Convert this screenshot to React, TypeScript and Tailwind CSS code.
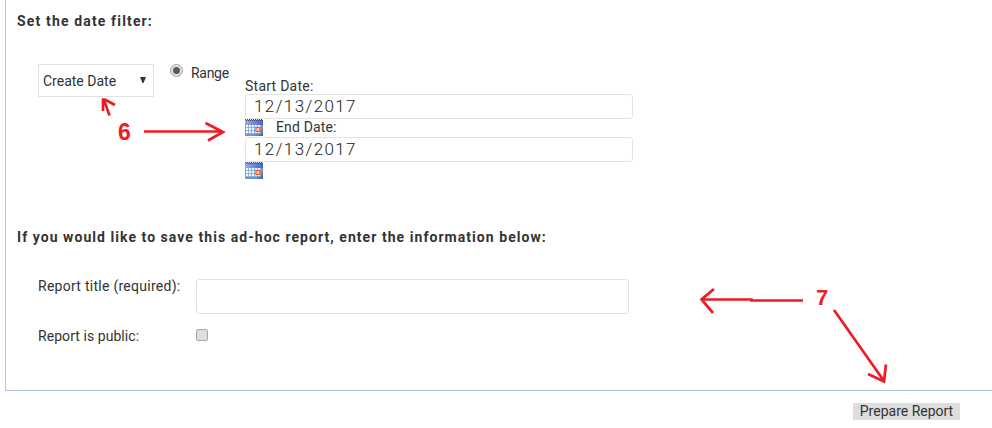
import React from "react";

function CalendarIcon() {
  return (
    <svg width="18" height="17" viewBox="0 0 18 17" className="block shrink-0">
      <defs>
        <linearGradient id="calHead" x1="0" x2="1" y1="0" y2="0">
          <stop offset="0" stopColor="#8fb0f2" />
          <stop offset="1" stopColor="#3a69d4" />
        </linearGradient>
        <linearGradient id="calBody" x1="0" x2="1" y1="0" y2="1">
          <stop offset="0" stopColor="#7fa6de" />
          <stop offset="0.75" stopColor="#6a92cc" />
          <stop offset="1" stopColor="#3c659f" />
        </linearGradient>
      </defs>
      <rect width="18" height="17" fill="url(#calBody)" />
      <rect width="18" height="6" fill="url(#calHead)" />
      <path d="M0 .5H18" stroke="#e2e2e2" />
      <path d="M0 .5H18M1 1.5H18" stroke="#4a4a4a" strokeDasharray="1 1" />
      {[6, 9, 12].map((y) =>
        [1, 4, 7, 10, 13].map((x) => (
          <rect key={`${x}-${y}`} x={x} y={y} width="2.300" height="2.300" fill="#f2f7ff" />
        ))
      )}
      <rect x="11" y="8.500" width="4" height="4" fill="#ffd9cc" stroke="#ee5a38" strokeWidth="1.300" />
    </svg>
  );
}

function DateInput({ value }: { value: string }) {
  return (
    <input
      readOnly
      value={value}
      className="block h-[25px] w-[388px] rounded-[3px] border border-[#e3e3e3] bg-white pl-[8px] pb-[1px] text-[17px] font-light tracking-[1.4px] text-[#222] outline-none"
    />
  );
}

export default function App() {
  return (
    <div className="relative h-[428px] w-[992px] overflow-hidden bg-white font-['Roboto','Liberation_Sans',sans-serif] text-[14px] leading-[16px] text-[#333]">
      <div className="ml-[5px] flex h-[391px] flex-col border-b border-l border-[#b0c6dd] pl-[11px] pt-[13px]">
        <h2 className="font-bold tracking-[1.15px]">Set the date filter:</h2>

        <div className="ml-[21px] mt-[35px] flex h-[116px] items-start">
          <div className="flex h-[33px] w-[116px] items-center justify-between border border-[#e1e1e1] pl-[4px] pr-[7px]">
            <span>Create Date</span>
            <svg width="6" height="6" viewBox="0 0 6 6" className="-mt-[2px]"><path d="M0 0H6L3.5 6H2.5Z" fill="#333" /></svg>
          </div>
          <span className="ml-[16px] flex size-[13px] items-center justify-center rounded-full border border-[#a2a2a2] bg-[#e2e2e2]">
            <span className="size-[7px] rounded-full bg-[#5a5a5a]" />
          </span>
          <span className="ml-[8px] mt-px w-[54px] tracking-[-0.3px]">Range</span>
          <div className="pt-[15px]">
            <div className="h-[15px] leading-[15px] tracking-[0.25px]">Start Date:</div>
            <DateInput value="12/13/2017" />
            <div className="flex h-[18px] items-start">
              <CalendarIcon />
              <span className="ml-[13px] tracking-[0.15px]">End Date:</span>
            </div>
            <DateInput value="12/13/2017" />
            <CalendarIcon />
          </div>
        </div>

        <h2 className="mt-[49px] whitespace-nowrap font-bold tracking-[1.05px]">
          If you would like to save this ad-hoc report, enter the information below:
        </h2>

        <div className="ml-[21px] mt-[33px] flex h-[50px] items-start">
          <label className="w-[158px] tracking-[0.27px]">Report title (required):</label>
          <input readOnly className="mt-px h-[35px] w-[433px] rounded-[3px] border border-[#e1e1e1] outline-none" />
        </div>
        <div className="ml-[21px] flex items-start">
          <label className="w-[158px] tracking-[0.06px]">Report is public:</label>
          <span className="mt-px size-[12px] rounded-[2px] border border-[#a6a6a6] bg-[#dedede]" />
        </div>
      </div>

      <div className="flex justify-end pr-[32px] pt-[12px]">
        <button className="h-[17px] w-[107px] whitespace-nowrap bg-[#ddd] leading-[17px]">Prepare Report</button>
      </div>

      <svg className="pointer-events-none absolute inset-0" width="992" height="428" viewBox="0 0 992 428" fill="none" stroke="#ed1c24" strokeWidth="2.7">
        <path d="M109.500 115.500L104 100M103 111V99.500H105L115 105" />
        <path d="M144 131.500H223M205.500 123L223 132L208 140.500" />
        <path d="M803 300.500H751.500V299.500H702M714 289L701.500 299.500L713 313" />
        <path d="M834 310L884 381M886 364.500L884 381.500L868 374" />
      </svg>
      <span className="absolute left-[118px] top-[120px] font-['Liberation_Sans',sans-serif] text-[23px] font-bold leading-[24px] text-[#ed1c24]">6</span>
      <span className="absolute left-[816px] top-[286px] font-['Liberation_Sans',sans-serif] text-[22px] font-bold leading-[24px] text-[#ed1c24]">7</span>
    </div>
  );
}
